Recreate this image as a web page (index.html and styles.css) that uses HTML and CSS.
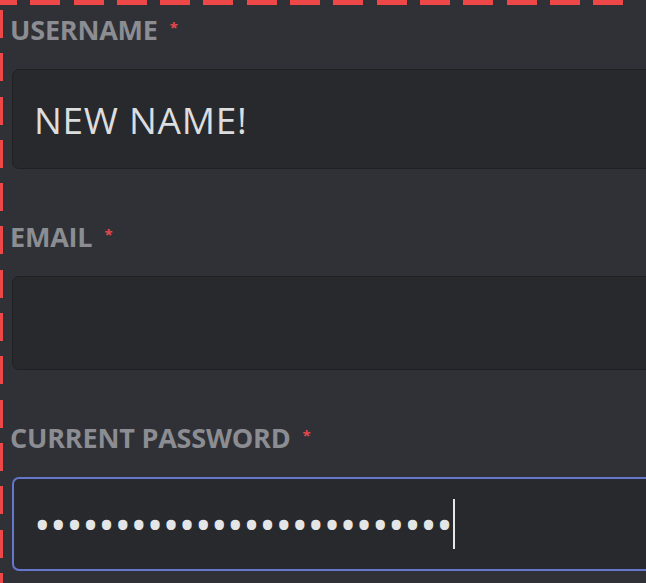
FILE: index.html
```html
<!DOCTYPE html>
<html lang="en">
<head>
<meta charset="utf-8">
<title>Account</title>
<link rel="stylesheet" href="styles.css">
</head>
<body>
<div class="page">
  <form class="form">
    <div class="field">
      <label class="label">USERNAME<span class="req">*</span></label>
      <div class="input input-tall"><span class="value">NEW NAME!</span></div>
    </div>
    <div class="field">
      <label class="label">EMAIL<span class="req">*</span></label>
      <div class="input"></div>
    </div>
    <div class="field">
      <label class="label">CURRENT PASSWORD<span class="req">*</span></label>
      <div class="input input-focus"><span class="dots">••••••••••••••••••••••••••</span><span class="caret"></span></div>
    </div>
  </form>
</div>
</body>
</html>
```

FILE: styles.css
```css
html, body {
  margin: 0;
  padding: 0;
  background: #303136;
}

.page {
  width: 646px;
  height: 583px;
  overflow: hidden;
  background-color: #303136;
  background-image:
    repeating-linear-gradient(to right, #ee4748 0 30px, transparent 30px 43.3px),
    repeating-linear-gradient(to bottom, #ee4748 0 28px, transparent 28px 43.3px);
  background-size: 100% 5px, 3px 100%;
  background-position: -13px 0, 0 10px;
  background-repeat: no-repeat;
  font-family: "Open Sans", "Noto Sans", sans-serif;
}

.form {
  padding: 12px 0 0 10px;
  display: flex;
  flex-direction: column;
  gap: 50px;
}

.field {
  display: flex;
  flex-direction: column;
  gap: 24px;
}

.label {
  font-size: 27px;
  line-height: 30px;
  font-weight: 700;
  color: #8b8d92;
  letter-spacing: -0.2px;
}

.req {
  color: #e8484a;
  font-size: 15px;
  vertical-align: 7px;
  margin-left: 12px;
}

.input {
  margin-left: 2px;
  width: 720px;
  height: 94px;
  box-sizing: border-box;
  background: #28292d;
  border: 1px solid #1f2024;
  border-radius: 7px;
  display: flex;
  align-items: center;
  padding-left: 21px;
  color: #dcddde;
}

.input-tall {
  height: 100px;
}

.input-focus {
  border: 2px solid #6477cc;
  padding-left: 20px;
}

.value {
  font-size: 37px;
  font-weight: 400;
  letter-spacing: 0.7px;
}

.dots {
  font-size: 44px;
  line-height: 50px;
  letter-spacing: -0.45px;
  color: #e4e5e7;
}

.caret {
  display: inline-block;
  width: 2px;
  height: 50px;
  background: #e6e6e8;
  margin-left: 1px;
}
```
